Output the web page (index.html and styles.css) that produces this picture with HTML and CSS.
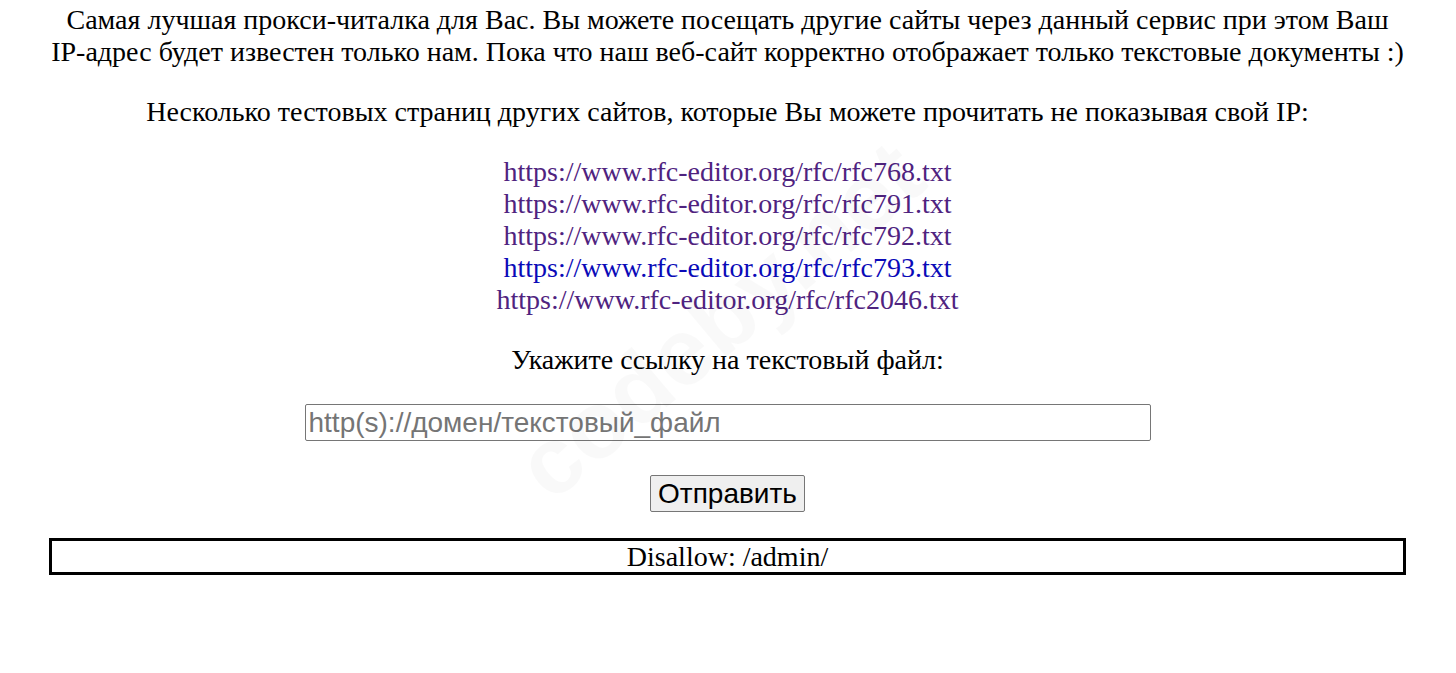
FILE: index.html
```html
<!DOCTYPE html>
<html lang="ru">
<head>
    <meta charset="UTF-8">
    <title>Прокси-читалка</title>
    <link rel="stylesheet" href="styles.css">
</head>
<body>
    <div class="page">
        <p class="intro">Самая лучшая прокси-читалка для Вас. Вы можете посещать другие сайты через данный сервис при этом Ваш <span class="nobr">IP-адрес</span> будет известен только нам. Пока что наш веб-сайт корректно отображает только текстовые документы :)</p>
        <p>Несколько тестовых страниц других сайтов, которые Вы можете прочитать не показывая свой IP:</p>
        <div class="links">
            <a href="#" class="visited">https://www.rfc-editor.org/rfc/rfc768.txt</a>
            <a href="#" class="visited">https://www.rfc-editor.org/rfc/rfc791.txt</a>
            <a href="#" class="visited">https://www.rfc-editor.org/rfc/rfc792.txt</a>
            <a href="#" class="fresh">https://www.rfc-editor.org/rfc/rfc793.txt</a>
            <a href="#" class="visited">https://www.rfc-editor.org/rfc/rfc2046.txt</a>
        </div>
        <form class="reader">
            <label for="url">Укажите ссылку на текстовый файл:</label>
            <input type="text" id="url" placeholder="http(s)://домен/текстовый_файл">
            <button type="button">Отправить</button>
        </form>
        <div class="result">Disallow: /admin/</div>
    </div>
    <div class="watermark">codeby.net</div>
</body>
</html>
```

FILE: styles.css
```css
body {
    margin: 0;
    background-color: #fff;
    font-family: "Liberation Serif", "Times New Roman", serif;
    font-size: 28px;
    color: #000;
    overflow: hidden;
}
.page {
    padding: 4px 50px 0 49px;
    text-align: center;
}
p {
    margin: 0 0 28px 0;
}
.intro {
    margin-left: -8px;
    margin-right: -8px;
}
.nobr {
    white-space: nowrap;
}
.links {
    display: flex;
    flex-direction: column;
    align-items: center;
    margin-bottom: 28px;
}
.links a {
    text-decoration: none;
}
.links a.visited {
    color: #4f237f;
}
.links a.fresh {
    color: #0a0ab8;
}
.reader {
    display: flex;
    flex-direction: column;
    align-items: center;
}
.reader label {
    display: block;
    margin-bottom: 28px;
}
.reader input {
    width: 846px;
    height: 37px;
    box-sizing: border-box;
    padding: 0 3px;
    border: 1px solid #767676;
    border-radius: 2px;
    font-family: "Liberation Sans", Arial, sans-serif;
    font-size: 28px;
    color: #000;
}
.reader input::placeholder {
    color: #757575;
}
.reader button {
    margin-top: 34px;
    height: 37px;
    padding: 0 7px;
    border: 1px solid #767676;
    border-radius: 2px;
    background: #efefef;
    font-family: "Liberation Sans", Arial, sans-serif;
    font-size: 28px;
    color: #000;
}
.result {
    margin-top: 26px;
    border: 3px solid #000;
    line-height: 31px;
}
.watermark {
    position: absolute;
    left: 720px;
    top: 320px;
    transform: translate(-50%, -50%) rotate(-40deg);
    font-family: "Liberation Sans", Arial, sans-serif;
    font-weight: bold;
    font-size: 95px;
    color: rgba(0, 0, 0, 0.022);
    pointer-events: none;
}
```
